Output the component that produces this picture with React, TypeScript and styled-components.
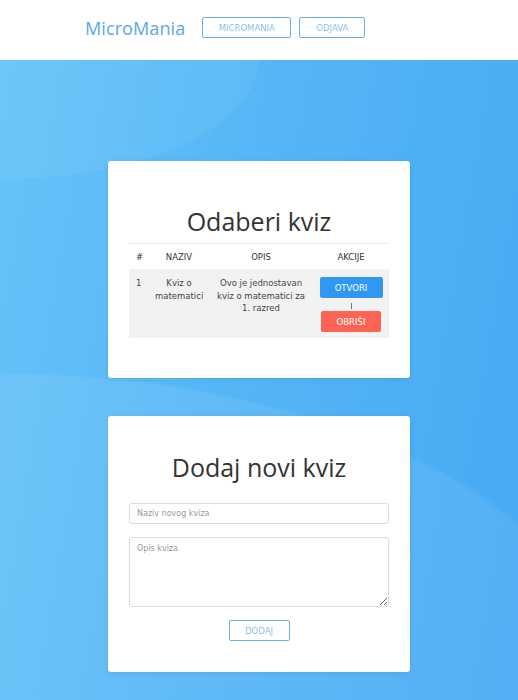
import React from 'react'
import styled, { createGlobalStyle } from 'styled-components'

const GlobalStyle = createGlobalStyle`
  html, body {
    margin: 0;
    padding: 0;
    font-family: "DejaVu Sans", "Open Sans", sans-serif;
    color: #333;
  }
  * { box-sizing: border-box; }
`

const quizzes = [
  { id: 1, name: 'Kviz o matematici', desc: 'Ovo je jednostavan kviz o matematici za 1. razred' },
]

const App = () => {
  return (
    <Page>
      <GlobalStyle />
      <Header>
        <Logo>MicroMania</Logo>
        <NavButton width={89}>MICROMANIA</NavButton>
        <NavButton width={66}>ODJAVA</NavButton>
      </Header>
      <Main>
        <Card top={45} bottom={40}>
          <Title>Odaberi kviz</Title>
          <Table>
            <HeadRow>
              <HeadCell align="left">#</HeadCell>
              <HeadCell>NAZIV</HeadCell>
              <HeadCell>OPIS</HeadCell>
              <HeadCell>AKCIJE</HeadCell>
            </HeadRow>
            {quizzes.map((q) => (
              <BodyRow key={q.id}>
                <Cell align="left">{q.id}</Cell>
                <Cell>{q.name}</Cell>
                <Cell>{q.desc}</Cell>
                <Actions>
                  <ActionButton color="#3098f3" width={63}>OTVORI</ActionButton>
                  <Divider />
                  <ActionButton color="#fd6454" width={60}>OBRIŠI</ActionButton>
                </Actions>
              </BodyRow>
            ))}
          </Table>
        </Card>
        <Card top={36} bottom={31}>
          <Title>Dodaj novi kviz</Title>
          <Form>
            <Input placeholder="Naziv novog kviza" />
            <TextArea placeholder="Opis kviza" />
            <AddButton>DODAJ</AddButton>
          </Form>
        </Card>
      </Main>
    </Page>
  )
}

export default App

const Page = styled.div`
  width: 100%;
  min-height: 700px;
  display: flex;
  flex-direction: column;
`
const Header = styled.div`
  height: 60px;
  background-color: white;
  display: flex;
  align-items: center;
  padding-left: 85px;
  padding-bottom: 5px;
`
const Logo = styled.div`
  font-family: "Open Sans", sans-serif;
  font-size: 18px;
  color: #5ba8e9;
  margin-right: 17px;
  letter-spacing: 0.1px;
`
const NavButton = styled.button<{ width: number }>`
  width: ${(p) => p.width}px;
  height: 21px;
  padding: 0;
  margin-right: 8px;
  background: white;
  border: 1.5px solid #68aee8;
  border-radius: 2px;
  color: #8dbfeb;
  font-family: inherit;
  font-size: 8.5px;
  cursor: pointer;
`
const Main = styled.div`
  flex: 1;
  padding: 101px 0 30px;
  display: flex;
  flex-direction: column;
  align-items: center;
  gap: 38px;
  background:
    radial-gradient(ellipse 620px 330px at 0% 100%, rgba(255, 255, 255, 0.07) 99%, transparent 100%),
    radial-gradient(ellipse 260px 120px at 0% 0%, rgba(255, 255, 255, 0.05) 99%, transparent 100%),
    linear-gradient(100deg, #67c3f8 0%, #55b6f6 45%, #46a9f3 100%);
`
const Card = styled.div<{ top: number; bottom: number }>`
  width: 302px;
  background: white;
  border-radius: 3px;
  box-shadow: 0 1px 6px rgba(0, 0, 0, 0.08);
  padding: ${(p) => p.top}px 21px ${(p) => p.bottom}px;
  display: flex;
  flex-direction: column;
  align-items: center;
`
const Title = styled.h1`
  margin: 0 0 7px;
  font-family: "Open Sans", sans-serif;
  font-size: 25px;
  font-weight: 400;
  line-height: 30px;
  color: #333;
`
const Table = styled.div`
  width: 100%;
  border-top: 1px solid #e6e6e6;
  font-size: 8.5px;
`
const HeadRow = styled.div`
  display: grid;
  grid-template-columns: 21px 58px 106px 74px;
  height: 25px;
  align-items: center;
`
const HeadCell = styled.div<{ align?: string }>`
  text-align: ${(p) => p.align || 'center'};
  padding-left: ${(p) => (p.align === 'left' ? '7px' : '0')};
  color: #333;
`
const BodyRow = styled.div`
  display: grid;
  grid-template-columns: 21px 58px 106px 74px;
  background: #f2f2f2;
  padding: 8px 0 6px;
`
const Cell = styled.div<{ align?: string }>`
  text-align: ${(p) => p.align || 'center'};
  padding: ${(p) => (p.align === 'left' ? '0 0 0 7px' : '0 5px')};
  line-height: 12.5px;
  color: #444;
`
const Actions = styled.div`
  display: flex;
  flex-direction: column;
  align-items: center;
`
const ActionButton = styled.button<{ color: string; width: number }>`
  width: ${(p) => p.width}px;
  height: 21px;
  padding: 0;
  border: none;
  border-radius: 2px;
  background: ${(p) => p.color};
  color: white;
  font-family: inherit;
  font-size: 8.5px;
`
const Divider = styled.div`
  width: 1px;
  height: 6px;
  margin: 5px 0 2px;
  background: #777;
`
const Form = styled.div`
  width: 100%;
  margin-top: 14px;
  display: flex;
  flex-direction: column;
  align-items: center;
  gap: 13px;
`
const Input = styled.input`
  width: 100%;
  height: 21px;
  border: 1px solid #dcdcdc;
  border-radius: 3px;
  padding: 0 7px;
  font-family: inherit;
  font-size: 8px;
  &::placeholder { color: #999; }
`
const TextArea = styled.textarea`
  width: 100%;
  height: 70px;
  border: 1px solid #dcdcdc;
  border-radius: 3px;
  padding: 6px 7px;
  font-family: inherit;
  font-size: 8px;
  resize: vertical;
  &::placeholder { color: #999; }
`
const AddButton = styled.button`
  width: 61px;
  height: 21px;
  padding: 0;
  background: white;
  border: 1.5px solid #68aee8;
  border-radius: 2px;
  color: #8dbfeb;
  font-family: inherit;
  font-size: 8.5px;
`
